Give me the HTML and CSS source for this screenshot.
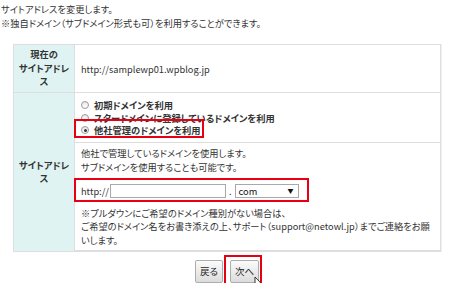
FILE: index.html
```html
<!DOCTYPE html>
<html lang="ja">
<head>
  <meta charset="UTF-8" />
  <title>サイトアドレスの変更</title>
  <link rel="stylesheet" href="styles.css">
</head>
<body>

  <p class="lead">サイトアドレスを変更します。<br>※独自ドメイン（サブドメイン形式も可）を利用することができます。</p>

  <div class="form-table">
    <div class="th">現在の<br>サイトアドレス</div>
    <div class="td current">http://samplewp01.wpblog.jp</div>

    <div class="th last">サイトアドレス</div>
    <div class="td split">
      <div class="choices">
        <label class="radio"><span class="dot"></span>初期ドメインを利用</label>
        <label class="radio"><span class="dot"></span>スタードメインに登録しているドメインを利用</label>
        <label class="radio"><span class="dot on"></span>他社管理のドメインを利用</label>
        <span class="mark mark-radio"></span>
      </div>
      <div class="custom">
        <p>他社で管理しているドメインを使用します。<br>サブドメインを使用することも可能です。</p>
        <div class="domain-row">
          <span>http://</span>
          <span class="input"></span>
          <span class="dot-sep">.</span>
          <span class="select">com<span class="arrow">▼</span></span>
          <span class="mark mark-domain"></span>
        </div>
        <p class="note">※プルダウンにご希望のドメイン種別がない場合は、<br>ご希望のドメイン名をお書き添えの上、サポート（support@netowl.jp）までご連絡をお願いします。</p>
      </div>
    </div>
  </div>

  <div class="actions">
    <span class="btn">戻る</span>
    <span class="btn next">次へ
      <span class="mark mark-next"></span>
      <svg class="cursor" width="12" height="18" viewBox="0 0 12 18">
        <path d="M1.5 2.5 L1.5 15.5 L4.5 12.5 L6.8 17 L8.6 16.1 L6.4 11.8 L10.5 11.8 Z" fill="rgba(0,0,0,0.25)" transform="translate(1 1)"/>
        <path d="M1 1 L1 14 L4 11 L6.3 15.5 L8.1 14.6 L5.9 10.3 L10 10.3 Z" fill="#fff" stroke="#222" stroke-width="0.9" stroke-linejoin="round"/>
      </svg>
    </span>
  </div>

</body>
</html>
```

FILE: styles.css
```css
body {
  margin: 0;
  font-family: "Noto Sans CJK JP", sans-serif;
  font-size: 9.25px;
  line-height: 14px;
  font-feature-settings: "palt";
  color: #333;
  background: #fff;
}
p {
  margin: 0;
}
.lead {
  margin: 2px 0 0 1px;
}
.form-table {
  display: grid;
  grid-template-columns: 61px 1fr;
  margin: 14px 9px 0 13px;
  border: 1px solid #dedede;
  box-shadow: 1px 0 0 #f0f0f0;
}
.th {
  display: flex;
  align-items: center;
  justify-content: center;
  text-align: center;
  font-weight: bold;
  line-height: 13.5px;
  padding: 0 2px;
  background: #e0f3f3;
  border-right: 1px solid #dedede;
  border-bottom: 1px solid #dedede;
}
.th.last, .split {
  border-bottom: none;
}
.td {
  border-bottom: 1px solid #dedede;
}
.current {
  padding: 17px 6px 16px;
}
.choices {
  position: relative;
  padding: 6px 6px 5px;
  line-height: 12.5px;
  font-weight: bold;
  border-bottom: 1px solid #dedede;
}
.radio {
  display: flex;
  align-items: center;
}
.dot {
  width: 6px;
  height: 6px;
  margin: 0 5px 0 0;
  border: 1px solid #9a9a9a;
  border-radius: 50%;
  background: linear-gradient(#e8e8e8, #fff);
  position: relative;
}
.dot.on::after {
  content: "";
  position: absolute;
  left: 1.5px;
  top: 1.5px;
  width: 3px;
  height: 3px;
  border-radius: 50%;
  background: #333;
}
.custom {
  padding: 3px 6px 3px;
}
.domain-row {
  position: relative;
  display: flex;
  align-items: center;
  height: 14px;
  margin: 10px 0 9px;
}
.input {
  width: 114px;
  height: 12px;
  border: 1px solid #a9a9a9;
  margin-left: 1px;
  background: #fff;
}
.dot-sep {
  margin: 0 3px;
}
.select {
  display: flex;
  justify-content: space-between;
  align-items: center;
  box-sizing: border-box;
  width: 64px;
  height: 14px;
  padding: 0 4px 0 3px;
  border: 1px solid #a9a9a9;
  background: #fff;
  color: #111;
}
.arrow {
  font-size: 6px;
}
.note {
  line-height: 13.5px;
}
.mark {
  position: absolute;
  border: 2px solid #e60012;
}
.mark-radio {
  left: -1px;
  top: 26px;
  width: 126px;
  height: 15px;
}
.mark-domain {
  left: -7px;
  top: -6px;
  width: 231px;
  height: 20px;
}
.actions {
  display: flex;
  justify-content: center;
  gap: 7px;
  margin: 8px 9px 0 13px;
}
.btn {
  position: relative;
  height: 21px;
  line-height: 21px;
  padding: 0 4px;
  font-size: 9.5px;
  color: #222;
  border: 1px solid #adadad;
  border-radius: 2px;
  background: linear-gradient(#fbfbfb, #dcdcdc);
}
.mark-next {
  left: -7px;
  top: -6px;
  width: 34px;
  height: 28px;
}
.cursor {
  position: absolute;
  left: 23px;
  top: 15px;
}
```
